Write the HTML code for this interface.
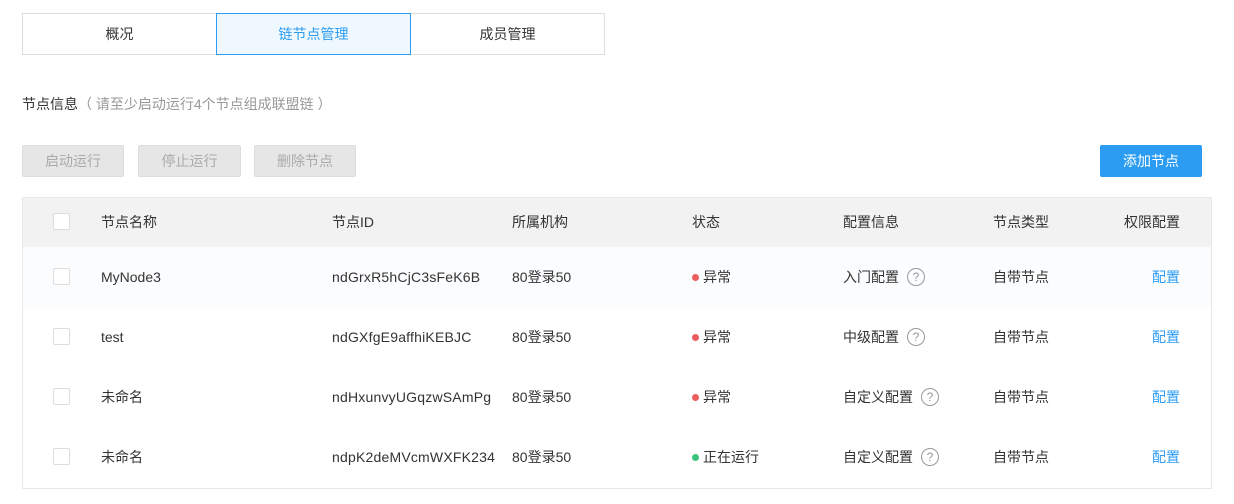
<!DOCTYPE html>
<html><head><meta charset="utf-8"><style>
*{margin:0;padding:0;box-sizing:border-box}
body{width:1234px;height:504px;background:#fff;font-family:"Liberation Sans","Noto Sans CJK SC",sans-serif;font-size:14px;color:#333;position:relative;overflow:hidden}
.a{position:absolute;white-space:nowrap;line-height:16px;height:16px}
.tab{position:absolute;top:13px;height:42px;border:1px solid #ddd;line-height:40px;text-align:center;font-size:14px;color:#333}
.btn{position:absolute;top:145px;height:32px;background:#e6e6e6;border:1px solid #ddd;border-radius:2px;color:#aaa;line-height:30px;text-align:center;font-size:14px}
.cb{position:absolute;left:53px;width:17px;height:17px;border:1px solid #ddd;border-radius:2px;background:#fff}
.dot{display:inline-block;width:7px;height:7px;border-radius:50%;margin-right:4px;vertical-align:1px}
.q{position:absolute;top:-1px;width:18px;height:18px;border:1px solid #999;border-radius:50%;text-align:center;line-height:16px;font-size:12px;color:#999}
.lk{color:#2b9cf2}
.id{letter-spacing:0.2px}
</style></head><body>
<div class="tab" style="left:22px;width:195px">概况</div>
<div class="tab" style="left:216px;width:195px;border-color:#2b9cf2;background:#f0f8ff;color:#2b9cf2;z-index:2">链节点管理</div>
<div class="tab" style="left:410px;width:195px">成员管理</div>
<div class="a" style="left:22px;top:96px">节点信息<span style="color:#999">（ 请至少启动运行4个节点组成联盟链 ）</span></div>
<div class="btn" style="left:22px;width:102px">启动运行</div>
<div class="btn" style="left:138px;width:103px">停止运行</div>
<div class="btn" style="left:254px;width:102px">删除节点</div>
<div class="a" style="left:1100px;top:145px;width:102px;height:32px;background:#2b9cf2;border-radius:2px;color:#fff;line-height:32px;text-align:center">添加节点</div>
<div class="a" style="left:22px;top:197px;width:1190px;height:292px;border:1px solid #e8e8e8"></div>
<div class="a" style="left:23px;top:198px;width:1188px;height:49px;background:#f2f2f2"></div>
<div class="a" style="left:23px;top:247px;width:1188px;height:60px;background:#fbfcfe"></div>
<div class="cb" style="top:213px"></div>
<div class="a" style="top:214px;left:101px">节点名称</div>
<div class="a" style="top:214px;left:332px">节点ID</div>
<div class="a" style="top:214px;left:512px">所属机构</div>
<div class="a" style="top:214px;left:692px">状态</div>
<div class="a" style="top:214px;left:843px">配置信息</div>
<div class="a" style="top:214px;left:993px">节点类型</div>
<div class="a" style="top:214px;left:1124px">权限配置</div>

<div class="cb" style="top:268px"></div>
<div class="a" style="top:269px;left:101px">MyNode3</div>
<div class="a id" style="top:269px;left:332px">ndGrxR5hCjC3sFeK6B</div>
<div class="a" style="top:269px;left:512px">80登录50</div>
<div class="a" style="top:269px;left:692px"><span class="dot" style="background:#ec5e5e"></span>异常</div>
<div class="a" style="top:269px;left:843px">入门配置</div><div class="a" style="top:269px;left:907px"><span class="q">?</span></div>
<div class="a" style="top:269px;left:993px">自带节点</div>
<div class="a lk" style="top:269px;left:1152px">配置</div>

<div class="cb" style="top:328px"></div>
<div class="a" style="top:329px;left:101px">test</div>
<div class="a id" style="top:329px;left:332px">ndGXfgE9affhiKEBJC</div>
<div class="a" style="top:329px;left:512px">80登录50</div>
<div class="a" style="top:329px;left:692px"><span class="dot" style="background:#ec5e5e"></span>异常</div>
<div class="a" style="top:329px;left:843px">中级配置</div><div class="a" style="top:329px;left:907px"><span class="q">?</span></div>
<div class="a" style="top:329px;left:993px">自带节点</div>
<div class="a lk" style="top:329px;left:1152px">配置</div>

<div class="cb" style="top:388px"></div>
<div class="a" style="top:389px;left:101px">未命名</div>
<div class="a id" style="top:389px;left:332px">ndHxunvyUGqzwSAmPg</div>
<div class="a" style="top:389px;left:512px">80登录50</div>
<div class="a" style="top:389px;left:692px"><span class="dot" style="background:#ec5e5e"></span>异常</div>
<div class="a" style="top:389px;left:843px">自定义配置</div><div class="a" style="top:389px;left:921px"><span class="q">?</span></div>
<div class="a" style="top:389px;left:993px">自带节点</div>
<div class="a lk" style="top:389px;left:1152px">配置</div>

<div class="cb" style="top:448px"></div>
<div class="a" style="top:449px;left:101px">未命名</div>
<div class="a id" style="top:449px;left:332px">ndpK2deMVcmWXFK234</div>
<div class="a" style="top:449px;left:512px">80登录50</div>
<div class="a" style="top:449px;left:692px"><span class="dot" style="background:#3cc47c"></span>正在运行</div>
<div class="a" style="top:449px;left:843px">自定义配置</div><div class="a" style="top:449px;left:921px"><span class="q">?</span></div>
<div class="a" style="top:449px;left:993px">自带节点</div>
<div class="a lk" style="top:449px;left:1152px">配置</div>
</body></html>
